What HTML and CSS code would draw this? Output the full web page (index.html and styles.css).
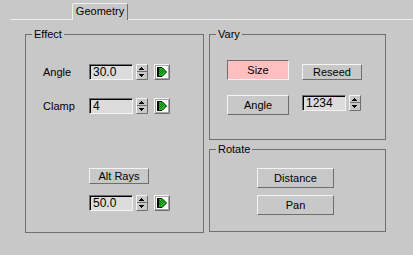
FILE: index.html
```html
<!DOCTYPE html>
<html lang="en">
<head>
    <meta charset="UTF-8">
    <title>Geometry rollout</title>
    <link rel="stylesheet" href="styles.css">
</head>
<body>
    <div class="tabs">
        <div class="tab">Geometry</div>
    </div>

    <div class="panel">
        <div class="group effect">
            <div class="group-title">Effect</div>

            <div class="field-row first-row">
                <span class="label">Angle</span>
                <div class="edit">30.0</div>
                <svg class="spin" width="12" height="16" viewBox="0 0 12 16">
                    <rect width="12" height="16" fill="#c8c8c8"/>
                    <path d="M0.5 15.5 V0.5 H11.5" stroke="#f4f4f4" fill="none"/>
                    <path d="M0.5 15.5 H11.5 V0.5" stroke="#6e6e6e" fill="none"/>
                    <rect x="1" y="7" width="10" height="1" fill="#6e6e6e"/>
                    <rect x="5" y="3" width="1" height="1"/><rect x="4" y="4" width="3" height="1"/><rect x="3" y="5" width="5" height="1"/>
                    <rect x="3" y="10" width="5" height="1"/><rect x="4" y="11" width="3" height="1"/><rect x="5" y="12" width="1" height="1"/>
                </svg>
                <svg class="key" width="16" height="16" viewBox="0 0 16 16">
                    <rect width="16" height="16" fill="#fff"/>
                    <path d="M0.5 15.5 V0.5 H15.5" stroke="#f4f4f4" fill="none"/>
                    <path d="M0.5 15.5 H15.5 V0.5" stroke="#6e6e6e" fill="none"/>
                    <rect x="1.5" y="1.5" width="13" height="13" stroke="#a8a8a8" fill="none"/>
                    <rect x="3" y="3" width="1" height="10"/>
                    <polygon points="4.5,3.5 8,3.5 12.5,8 8,12.5 4.5,12.5" fill="#18c818" stroke="#000"/>
                    <rect x="5" y="5" width="1" height="1" fill="#0a6a0a"/><rect x="7" y="5" width="1" height="1" fill="#0a6a0a"/>
                    <rect x="6" y="6" width="1" height="1" fill="#0a6a0a"/><rect x="8" y="6" width="1" height="1" fill="#0a6a0a"/>
                    <rect x="5" y="7" width="1" height="1" fill="#0a6a0a"/><rect x="7" y="7" width="1" height="1" fill="#0a6a0a"/><rect x="9" y="7" width="1" height="1" fill="#0a6a0a"/>
                    <rect x="6" y="8" width="1" height="1" fill="#0a6a0a"/><rect x="8" y="8" width="1" height="1" fill="#0a6a0a"/>
                    <rect x="5" y="9" width="1" height="1" fill="#0a6a0a"/><rect x="7" y="9" width="1" height="1" fill="#0a6a0a"/>
                    <rect x="6" y="10" width="1" height="1" fill="#0a6a0a"/>
                </svg>
            </div>

            <div class="field-row second-row">
                <span class="label">Clamp</span>
                <div class="edit">4</div>
                <svg class="spin" width="12" height="16" viewBox="0 0 12 16">
                    <rect width="12" height="16" fill="#c8c8c8"/>
                    <path d="M0.5 15.5 V0.5 H11.5" stroke="#f4f4f4" fill="none"/>
                    <path d="M0.5 15.5 H11.5 V0.5" stroke="#6e6e6e" fill="none"/>
                    <rect x="1" y="7" width="10" height="1" fill="#6e6e6e"/>
                    <rect x="5" y="3" width="1" height="1"/><rect x="4" y="4" width="3" height="1"/><rect x="3" y="5" width="5" height="1"/>
                    <rect x="3" y="10" width="5" height="1"/><rect x="4" y="11" width="3" height="1"/><rect x="5" y="12" width="1" height="1"/>
                </svg>
                <svg class="key" width="16" height="16" viewBox="0 0 16 16">
                    <rect width="16" height="16" fill="#fff"/>
                    <path d="M0.5 15.5 V0.5 H15.5" stroke="#f4f4f4" fill="none"/>
                    <path d="M0.5 15.5 H15.5 V0.5" stroke="#6e6e6e" fill="none"/>
                    <rect x="1.5" y="1.5" width="13" height="13" stroke="#a8a8a8" fill="none"/>
                    <rect x="3" y="3" width="1" height="10"/>
                    <polygon points="4.5,3.5 8,3.5 12.5,8 8,12.5 4.5,12.5" fill="#18c818" stroke="#000"/>
                    <rect x="5" y="5" width="1" height="1" fill="#0a6a0a"/><rect x="7" y="5" width="1" height="1" fill="#0a6a0a"/>
                    <rect x="6" y="6" width="1" height="1" fill="#0a6a0a"/><rect x="8" y="6" width="1" height="1" fill="#0a6a0a"/>
                    <rect x="5" y="7" width="1" height="1" fill="#0a6a0a"/><rect x="7" y="7" width="1" height="1" fill="#0a6a0a"/><rect x="9" y="7" width="1" height="1" fill="#0a6a0a"/>
                    <rect x="6" y="8" width="1" height="1" fill="#0a6a0a"/><rect x="8" y="8" width="1" height="1" fill="#0a6a0a"/>
                    <rect x="5" y="9" width="1" height="1" fill="#0a6a0a"/><rect x="7" y="9" width="1" height="1" fill="#0a6a0a"/>
                    <rect x="6" y="10" width="1" height="1" fill="#0a6a0a"/>
                </svg>
            </div>

            <div class="btn alt-rays">Alt Rays</div>

            <div class="field-row rays-row">
                <div class="edit">50.0</div>
                <svg class="spin" width="12" height="16" viewBox="0 0 12 16">
                    <rect width="12" height="16" fill="#c8c8c8"/>
                    <path d="M0.5 15.5 V0.5 H11.5" stroke="#f4f4f4" fill="none"/>
                    <path d="M0.5 15.5 H11.5 V0.5" stroke="#6e6e6e" fill="none"/>
                    <rect x="1" y="7" width="10" height="1" fill="#6e6e6e"/>
                    <rect x="5" y="3" width="1" height="1"/><rect x="4" y="4" width="3" height="1"/><rect x="3" y="5" width="5" height="1"/>
                    <rect x="3" y="10" width="5" height="1"/><rect x="4" y="11" width="3" height="1"/><rect x="5" y="12" width="1" height="1"/>
                </svg>
                <svg class="key" width="16" height="16" viewBox="0 0 16 16">
                    <rect width="16" height="16" fill="#fff"/>
                    <path d="M0.5 15.5 V0.5 H15.5" stroke="#f4f4f4" fill="none"/>
                    <path d="M0.5 15.5 H15.5 V0.5" stroke="#6e6e6e" fill="none"/>
                    <rect x="1.5" y="1.5" width="13" height="13" stroke="#a8a8a8" fill="none"/>
                    <rect x="3" y="3" width="1" height="10"/>
                    <polygon points="4.5,3.5 8,3.5 12.5,8 8,12.5 4.5,12.5" fill="#18c818" stroke="#000"/>
                    <rect x="5" y="5" width="1" height="1" fill="#0a6a0a"/><rect x="7" y="5" width="1" height="1" fill="#0a6a0a"/>
                    <rect x="6" y="6" width="1" height="1" fill="#0a6a0a"/><rect x="8" y="6" width="1" height="1" fill="#0a6a0a"/>
                    <rect x="5" y="7" width="1" height="1" fill="#0a6a0a"/><rect x="7" y="7" width="1" height="1" fill="#0a6a0a"/><rect x="9" y="7" width="1" height="1" fill="#0a6a0a"/>
                    <rect x="6" y="8" width="1" height="1" fill="#0a6a0a"/><rect x="8" y="8" width="1" height="1" fill="#0a6a0a"/>
                    <rect x="5" y="9" width="1" height="1" fill="#0a6a0a"/><rect x="7" y="9" width="1" height="1" fill="#0a6a0a"/>
                    <rect x="6" y="10" width="1" height="1" fill="#0a6a0a"/>
                </svg>
            </div>
        </div>

        <div class="column">
            <div class="group vary">
                <div class="group-title">Vary</div>
                <div class="vary-row top-row">
                    <div class="btn pressed size-btn">Size</div>
                    <div class="btn reseed-btn">Reseed</div>
                </div>
                <div class="vary-row bottom-row">
                    <div class="btn angle-btn">Angle</div>
                    <div class="edit seed">1234</div>
                    <svg class="spin" width="12" height="16" viewBox="0 0 12 16">
                        <rect width="12" height="16" fill="#c8c8c8"/>
                        <path d="M0.5 15.5 V0.5 H11.5" stroke="#f4f4f4" fill="none"/>
                        <path d="M0.5 15.5 H11.5 V0.5" stroke="#6e6e6e" fill="none"/>
                        <rect x="1" y="7" width="10" height="1" fill="#6e6e6e"/>
                        <rect x="5" y="3" width="1" height="1"/><rect x="4" y="4" width="3" height="1"/><rect x="3" y="5" width="5" height="1"/>
                        <rect x="3" y="10" width="5" height="1"/><rect x="4" y="11" width="3" height="1"/><rect x="5" y="12" width="1" height="1"/>
                    </svg>
                </div>
            </div>

            <div class="group rotate">
                <div class="group-title">Rotate</div>
                <div class="btn wide-btn distance-btn">Distance</div>
                <div class="btn wide-btn pan-btn">Pan</div>
            </div>
        </div>
    </div>
</body>
</html>
```

FILE: styles.css
```css
body {
    margin: 0;
    font-family: "Liberation Sans", Arial, sans-serif;
    font-size: 11px;
    background-color: #c8c8c8;
    color: black;
    width: 413px;
    height: 255px;
    overflow: hidden;
}

.tabs {
    margin-left: 10px;
    height: 19px;
    border-bottom: 1px solid #f0f0f0;
    display: flex;
    align-items: flex-end;
}

.tab {
    margin-left: 62px;
    margin-bottom: -1px;
    width: 56px;
    height: 17px;
    box-sizing: border-box;
    background-color: #c8c8c8;
    border-top: 1px solid #f0f0f0;
    border-left: 1px solid #f0f0f0;
    border-right: 1px solid #6e6e6e;
    border-top-left-radius: 2px;
    border-top-right-radius: 2px;
    text-align: center;
    line-height: 15px;
}

.panel {
    display: flex;
    gap: 5px;
    padding: 14px 0 0 25px;
}

.column {
    display: flex;
    flex-direction: column;
    gap: 9px;
}

.group {
    border: 1px solid #707070;
    box-sizing: border-box;
}

.group-title {
    width: fit-content;
    margin: -7px 0 0 6px;
    padding: 0 2px;
    line-height: 13px;
    background-color: #c8c8c8;
}

.effect {
    width: 179px;
    height: 199px;
}

.vary {
    width: 177px;
    height: 106px;
}

.rotate {
    width: 177px;
    height: 83px;
}

.field-row {
    display: flex;
    align-items: center;
    height: 16px;
    margin-left: 17px;
}

.first-row {
    margin-top: 23px;
}

.second-row {
    margin-top: 18px;
}

.rays-row {
    margin-top: 11px;
    margin-left: 63px;
}

.label {
    width: 46px;
}

.edit {
    width: 44px;
    height: 16px;
    box-sizing: border-box;
    background-color: #dcdcdc;
    border: 1px solid;
    border-color: #6e6e6e #f4f4f4 #f4f4f4 #6e6e6e;
    box-shadow: inset 1px 1px 0 #000;
    padding-left: 3px;
    line-height: 14px;
    font-size: 12px;
}

.spin {
    display: block;
    margin-left: 3px;
}

.key {
    display: block;
    margin-left: 6px;
}

.btn {
    box-sizing: border-box;
    background-color: #c8c8c8;
    border: 1px solid;
    border-color: #f4f4f4 #6e6e6e #6e6e6e #f4f4f4;
    text-align: center;
}

.btn.pressed {
    background-color: #ffbfbf;
    border-color: #6e6e6e #f4f4f4 #f4f4f4 #6e6e6e;
}

.alt-rays {
    width: 60px;
    height: 16px;
    line-height: 14px;
    margin: 54px 0 0 63px;
}

.vary-row {
    display: flex;
    margin-left: 17px;
}

.top-row {
    margin-top: 19px;
    align-items: flex-end;
}

.bottom-row {
    margin-top: 15px;
    align-items: flex-start;
}

.size-btn,
.angle-btn {
    width: 62px;
    height: 20px;
    line-height: 18px;
}

.reseed-btn {
    width: 60px;
    height: 16px;
    line-height: 14px;
    margin-left: 13px;
}

.seed {
    margin-left: 13px;
}

.wide-btn {
    width: 77px;
    height: 20px;
    line-height: 18px;
    margin-left: 47px;
}

.distance-btn {
    margin-top: 12px;
}

.pan-btn {
    margin-top: 7px;
}
```
